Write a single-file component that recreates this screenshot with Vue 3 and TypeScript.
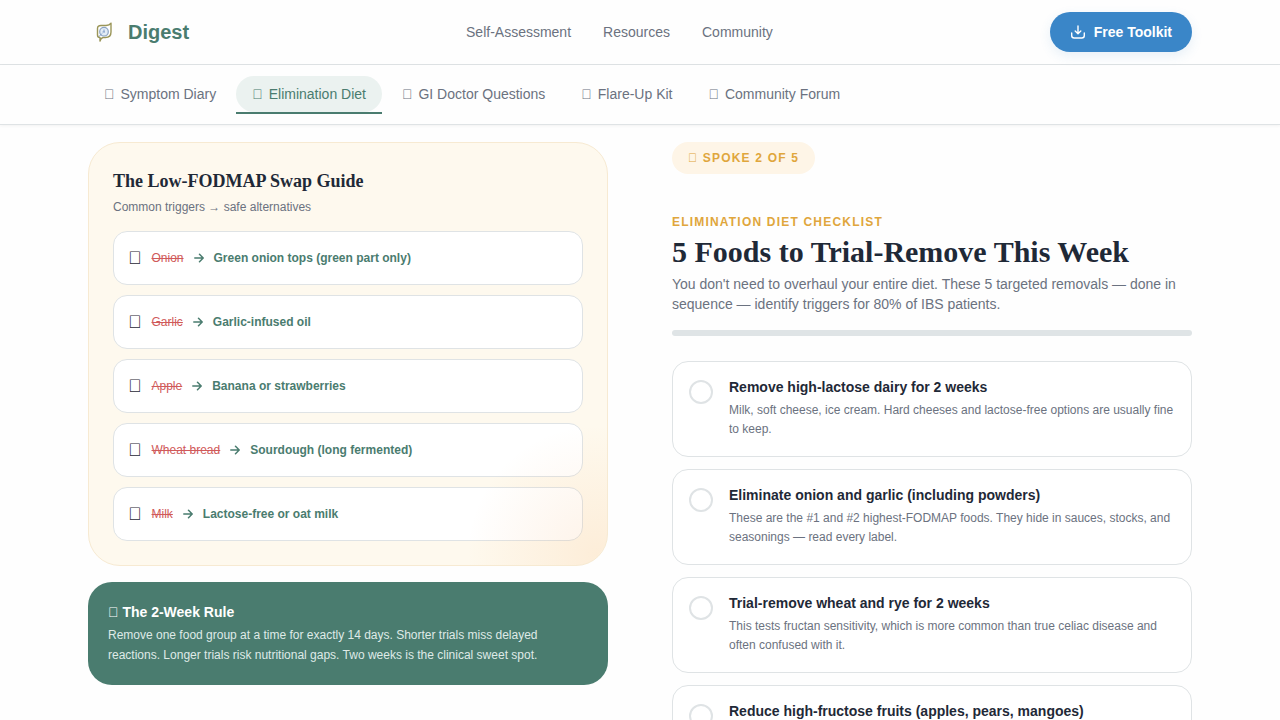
<script setup lang="ts">
import { ref } from 'vue'

interface Tab { label: string; active?: boolean }
interface Swap { from: string; to: string }
interface Task { title: string; text?: string }

// Unassigned code point: drawn as the font's empty box
const box = '\u{F0000}'

const links: string[] = ['Self-Assessment', 'Resources', 'Community']

const tabs: Tab[] = [
  { label: 'Symptom Diary' },
  { label: 'Elimination Diet', active: true },
  { label: 'GI Doctor Questions' },
  { label: 'Flare-Up Kit' },
  { label: 'Community Forum' },
]

const swaps: Swap[] = [
  { from: 'Onion', to: 'Green onion tops (green part only)' },
  { from: 'Garlic', to: 'Garlic-infused oil' },
  { from: 'Apple', to: 'Banana or strawberries' },
  { from: 'Wheat bread', to: 'Sourdough (long fermented)' },
  { from: 'Milk', to: 'Lactose-free or oat milk' },
]

const tasks: Task[] = [
  { title: 'Remove high-lactose dairy for 2 weeks', text: 'Milk, soft cheese, ice cream. Hard cheeses and lactose-free options are usually fine to keep.' },
  { title: 'Eliminate onion and garlic (including powders)', text: 'These are the #1 and #2 highest-FODMAP foods. They hide in sauces, stocks, and seasonings — read every label.' },
  { title: 'Trial-remove wheat and rye for 2 weeks', text: 'This tests fructan sensitivity, which is more common than true celiac disease and often confused with it.' },
  { title: 'Reduce high-fructose fruits (apples, pears, mangoes)' },
]

const done = ref<boolean[]>(tasks.map(() => false))
</script>

<template>
  <div class="page">
    <header class="topbar">
      <div class="wrap topbar-row">
        <a class="brand" href="#">
          <svg class="logo" viewBox="0 0 32 32" fill="none" aria-hidden="true">
            <path d="M9.500 19V12.500Q9.500 9.500 13 9.500H18Q21.500 9.500 23 7.200V16Q23 21.500 17.500 21.500H15Q12.800 22 12 25V21.500Q9.500 21.500 9.500 19Z" stroke="#9a9558" stroke-width="1.400" stroke-linejoin="round" />
            <circle cx="16" cy="15.700" r="4.300" fill="#e3ecf6" stroke="#8ba4c4" stroke-width="1.200" />
            <path d="M11 20.500L14 17.500M16 16V13.500M14.500 16H17" stroke="#7f9cc8" />
          </svg>
          <span>Digest</span>
        </a>
        <nav class="links" aria-label="Main">
          <a v-for="link in links" :key="link" href="#">{{ link }}</a>
        </nav>
        <button class="toolkit" type="button">
          <svg viewBox="0 0 16 16" width="16" height="16" fill="none" stroke="currentColor" stroke-width="1.400" stroke-linecap="round" stroke-linejoin="round" aria-hidden="true">
            <path d="M8 2V9.500M5.200 7L8 9.800L10.800 7M1.700 9V11.500Q1.700 14 4.200 14H11.800Q14.300 14 14.300 11.500V9" />
          </svg>
          <span>Free Toolkit</span>
        </button>
      </div>
    </header>

    <nav class="subnav" aria-label="Guides">
      <div class="wrap tabs">
        <a v-for="tab in tabs" :key="tab.label" href="#" class="tab" :class="{ active: tab.active }">
          <span aria-hidden="true">{{ box }}</span><span>{{ tab.label }}</span>
        </a>
      </div>
    </nav>

    <main class="wrap columns">
      <aside class="left">
        <section class="guide">
          <h2>The Low-FODMAP Swap Guide</h2>
          <p class="sub">Common triggers → safe alternatives</p>
          <ul class="swaps">
            <li v-for="swap in swaps" :key="swap.from">
              <span class="food" aria-hidden="true">{{ box }}</span>
              <del>{{ swap.from }}</del>
              <svg viewBox="0 0 10 10" width="10" height="10" fill="none" stroke="currentColor" stroke-width="1.500" stroke-linecap="round" stroke-linejoin="round" aria-hidden="true">
                <path d="M0.800 5H9M5.500 1.300L9.200 5L5.500 8.700" />
              </svg>
              <strong>{{ swap.to }}</strong>
            </li>
          </ul>
        </section>
        <section class="rule">
          <h3>{{ box }} The 2-Week Rule</h3>
          <p>Remove one food group at a time for exactly 14 days. Shorter trials miss delayed reactions. Longer trials risk nutritional gaps. Two weeks is the clinical sweet spot.</p>
        </section>
      </aside>

      <section class="right">
        <p class="badge">{{ box }} SPOKE 2 OF 5</p>
        <p class="eyebrow">ELIMINATION DIET CHECKLIST</p>
        <h1>5 Foods to Trial-Remove This Week</h1>
        <p class="lead">You don't need to overhaul your entire diet. These 5 targeted removals — done in sequence — identify triggers for 80% of IBS patients.</p>
        <div class="progress" role="progressbar" aria-label="Checklist progress" aria-valuenow="0" aria-valuemin="0" aria-valuemax="5"></div>
        <div class="tasks">
          <label v-for="(task, i) in tasks" :key="task.title" class="task">
            <input v-model="done[i]" type="checkbox" />
            <span class="task-body">
              <span class="task-title">{{ task.title }}</span>
              <span v-if="task.text" class="task-text">{{ task.text }}</span>
            </span>
          </label>
        </div>
      </section>
    </main>
  </div>
</template>

<style>
body {
  margin: 0;
  background: #fefefe;
}
</style>

<style scoped>
.page {
  min-height: 100vh;
  color: #1f2937;
  font-family: "Liberation Sans", Arial, sans-serif;
  font-size: 14px;
  line-height: 20px;
}
.page * { box-sizing: border-box; }
h1, h2, h3, p, ul { margin: 0; padding: 0; }
a { color: inherit; text-decoration: none; }
.wrap {
  max-width: 1152px;
  margin: 0 auto;
  padding: 0 24px;
}
.topbar { border-bottom: 1px solid #dfe3e5; }
.topbar-row {
  display: flex;
  align-items: center;
  justify-content: space-between;
  height: 64px;
}
.brand {
  display: flex;
  align-items: center;
  gap: 8px;
  color: #4a7c6f;
  font-size: 20px;
  font-weight: 700;
}
.logo { width: 32px; height: 32px; }
.links {
  display: flex;
  gap: 32px;
  color: #6b7280;
}
.toolkit {
  display: flex;
  align-items: center;
  gap: 8px;
  height: 40px;
  padding: 0 20px;
  border: 0;
  border-radius: 20px;
  background: #3a86c8;
  box-shadow: 0 4px 12px rgba(58, 134, 200, 0.12);
  color: #fff;
  font: inherit;
  font-weight: 700;
}
.subnav {
  border-bottom: 1px solid #dfe3e5;
  box-shadow: 0 1px 3px rgba(0, 0, 0, 0.05);
}
.tabs {
  display: flex;
  gap: 4px;
  padding-top: 11px;
  padding-bottom: 12px;
}
.tab {
  position: relative;
  display: flex;
  align-items: center;
  gap: 6px;
  height: 36px;
  padding: 0 16px;
  border-radius: 18px;
  color: #6b7280;
}
.tab.active {
  background: #ebf2f0;
  color: #4a7c6f;
}
.tab.active::after {
  content: "";
  position: absolute;
  left: 0;
  right: 0;
  bottom: -2px;
  height: 2px;
  background: #4a7c6f;
}
.columns {
  display: grid;
  grid-template-columns: 1fr 1fr;
  gap: 64px;
  padding-top: 17px;
}
.left {
  display: flex;
  flex-direction: column;
  gap: 16px;
}
.guide {
  position: relative;
  overflow: hidden;
  padding: 24px;
  border: 1px solid #f7ead2;
  border-radius: 32px;
  background: #fef9ee;
}
.guide::after {
  content: "";
  position: absolute;
  right: -120px;
  bottom: -120px;
  width: 260px;
  height: 260px;
  background: radial-gradient(closest-side, rgba(246, 165, 85, 0.14), transparent);
  pointer-events: none;
}
h2 {
  font: 700 18px/28px "Liberation Serif", "Times New Roman", serif;
}
.sub {
  margin: 4px 0 16px;
  color: #6b7280;
  font-size: 12px;
  line-height: 16px;
}
.swaps {
  display: grid;
  gap: 10px;
  list-style: none;
}
.swaps li {
  display: flex;
  align-items: center;
  gap: 10px;
  height: 54px;
  padding: 0 14px;
  border: 1px solid #dfe3e5;
  border-radius: 14px;
  background: #fff;
  color: #4a7c6f;
  font-size: 12px;
}
.food { color: #1f2937; font-size: 18px; }
del { color: #d05a5a; }
.rule {
  padding: 20px;
  border-radius: 24px;
  background: #4a7c6f;
  color: #fff;
}
h3 { font-size: 14px; line-height: 20px; }
.rule p {
  margin-top: 3px;
  color: #dfeae7;
  font-size: 12px;
  line-height: 20px;
}
.right {
  display: flex;
  flex-direction: column;
}
.badge,
.eyebrow {
  color: #e0a63c;
  font-size: 12px;
  font-weight: 700;
  letter-spacing: 0.1em;
}
.badge {
  align-self: flex-start;
  padding: 6px 16px;
  border-radius: 16px;
  background: #fef5e7;
}
.eyebrow { margin-top: 38px; }
h1 {
  font: 700 30px/40px "Liberation Serif", "Times New Roman", serif;
}
.lead {
  margin-top: 2px;
  color: #6b7280;
}
.progress {
  height: 6px;
  margin-top: 16px;
  border-radius: 3px;
  background: #dfe4e6;
}
.tasks {
  display: grid;
  gap: 12px;
  margin-top: 25px;
}
.task {
  display: flex;
  align-items: flex-start;
  gap: 16px;
  padding: 16px 16px 17px;
  border: 1px solid #dfe3e5;
  border-radius: 16px;
  background: #fff;
}
.task input {
  appearance: none;
  flex: none;
  width: 24px;
  height: 24px;
  margin: 2px 0 0;
  border: 2px solid #dfe3e5;
  border-radius: 50%;
}
.task input:checked { background: #4a7c6f; border-color: #4a7c6f; }
.task-body { display: grid; gap: 5px; }
.task-title { font-weight: 700; line-height: 18px; }
.task-text {
  color: #6b7280;
  font-size: 12px;
  line-height: 19px;
}
</style>
